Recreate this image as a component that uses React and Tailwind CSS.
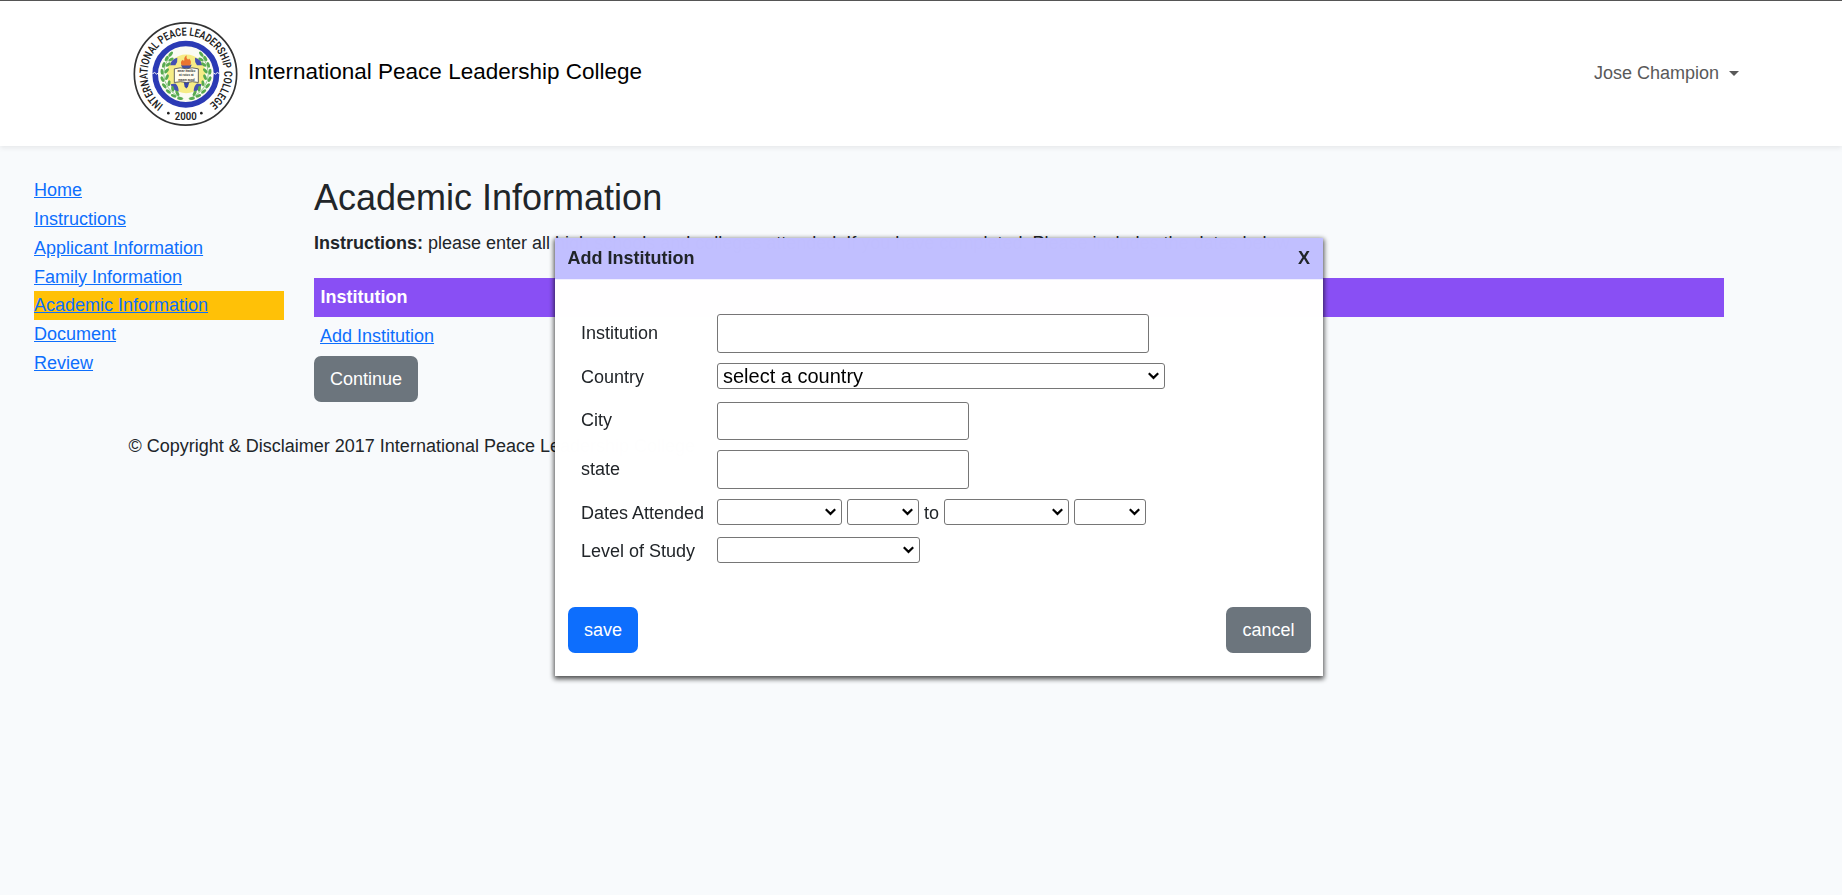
const NAV = [
  'Home',
  'Instructions',
  'Applicant Information',
  'Family Information',
  'Academic Information',
  'Document',
  'Review',
];

const LEAVES = [
  [152, 131, -50], [140, 144, -60], [153, 147, -30], [131, 163, -75], [145, 162, -35],
  [126, 184, -95], [140, 181, -50], [127, 206, -115], [141, 200, -65], [133, 226, -130],
  [147, 218, -80], [145, 243, -145], [158, 235, -100], [161, 256, -160], [172, 248, -120],
  [180, 264, -172],
];

function Seal() {
  return (
    <svg width="106" height="106" viewBox="36 31.5 318 318" className="block shrink-0">
      <defs>
        <path id="ring-top" d="M131 284 A115 115 0 1 1 268 281" />
        <g id="branch">
          <path d="M148 138 Q115 190 145 232 Q164 256 190 264" fill="none" stroke="#5cab52" strokeWidth="2" />
          {LEAVES.map(([x, y, r]) => (
            <ellipse key={`${x}-${y}`} cx={x} cy={y} rx="9" ry="4.500" fill="#58ab50" transform={`rotate(${r} ${x} ${y})`} />
          ))}
        </g>
      </defs>
      <circle cx="196.500" cy="190.500" r="153.500" fill="#fff" stroke="#333" strokeWidth="5" />
      <circle cx="197.500" cy="191" r="92" fill="#fbfbf2" stroke="#2b3ab5" strokeWidth="17" />
      <path d="M97 190l7-4 6 5 6-4M299 190l-7-4-6 5-6-4" fill="none" stroke="#fff" strokeWidth="3" />
      <circle cx="198.500" cy="190" r="58" fill="#f6ec86" />
      <path d="M150 164q4-18 22-22q2 12-6 22zM247 164q-4-18-22-22q-2 12 6 22zM152 221q6 20 24 22q0-16-10-24zM245 221q-6 20-24 22q0-16 10-24z" fill="#4451b2" />
      <use href="#branch" />
      <use href="#branch" transform="translate(396 0) scale(-1 1)" />
      <path d="M191 214h17l-4 15-5 5-5-5z" fill="#3443a8" />
      <path d="M183 163h32l-5 12h-22z" fill="#4450a0" />
      <path d="M185 165q-6-12 4-17q2 5 4 1q-2-9 7-15q-2 8 3 12q3 3 4-2q10 9 3 21z" fill="#ea7430" />
      <path d="M163 175q18-6 36 0q17-6 36 0v41q-18-5-36 0q-17-5-36 0z" fill="#fffdf0" stroke="#4b4b4b" strokeWidth="2.500" />
      <g fontFamily="Liberation Sans, sans-serif" fontWeight="bold" fill="#333" textAnchor="middle">
        <text x="199" y="185" fontSize="9">amar matibo</text>
        <text x="199" y="197.500" fontSize="9">at rotos at</text>
        <text x="199" y="210" fontSize="9">maam acad</text>
      </g>
      <g fontFamily="Roboto, sans-serif" fontWeight="600" fill="#222">
        <text fontSize="34">
          <textPath href="#ring-top" startOffset="1" textLength="574" lengthAdjust="spacingAndGlyphs">
            INTERNATIONAL PEACE LEADERSHIP COLLEGE
          </textPath>
        </text>
        <text fontSize="32" x="164" y="329" textLength="66" lengthAdjust="spacingAndGlyphs">2000</text>
      </g>
      <circle cx="145" cy="308" r="4" fill="#222" />
      <circle cx="244" cy="308" r="4" fill="#222" />
    </svg>
  );
}

function Select({ className, children }) {
  return (
    <div className={`flex h-[26px] items-center justify-between rounded-[3px] border border-[#767676] bg-white pl-[5px] pr-[5px] text-[20px] leading-none text-black ${className}`}>
      <span>{children}</span>
      <svg width="11" height="8" viewBox="0 0 11 8" fill="none" stroke="#000" strokeWidth="2.200" className="shrink-0">
        <path d="M.8 1.300 5.500 5.900 10.200 1.300" />
      </svg>
    </div>
  );
}

function TextField({ className }) {
  return <div className={`rounded-[3px] border border-[#767676] bg-white ${className}`} />;
}

function Field({ label, className, labelClass = '', children }) {
  return (
    <div className={`flex items-center ${className}`}>
      <span className={`w-[136px] shrink-0 ${labelClass}`}>{label}</span>
      {children}
    </div>
  );
}

function Dialog() {
  return (
    <div className="absolute left-[555px] top-[238px] h-[438px] w-[768px] bg-white opacity-[0.999] shadow-[0_2px_5px_1px_rgba(0,0,0,0.7)]">
      <div className="flex h-[41px] items-center justify-between bg-[#c1bfff] pl-[12.500px] pr-[13px] font-bold">
        <span>Add Institution</span>
        <span>X</span>
      </div>
      <div className="h-px bg-[#f0f0ff]" />
      <div className="flex flex-col pl-[26px] pt-[34px]">
        <Field label="Institution" className="h-[39px]">
          <TextField className="h-[39px] w-[432px]" />
        </Field>
        <Field label="Country" className="mt-[10px] h-[26px]" labelClass="pt-[2px]">
          <Select className="w-[448px]">select a country</Select>
        </Field>
        <Field label="City" className="mt-[13px] h-[38px]" labelClass="pb-[2px]">
          <TextField className="h-[38px] w-[252px]" />
        </Field>
        <Field label="state" className="mt-[10px] h-[39px]">
          <TextField className="h-[39px] w-[252px]" />
        </Field>
        <Field label="Dates Attended" className="mt-[10px] h-[26px]" labelClass="pt-[2px]">
          <Select className="w-[125px]" />
          <Select className="ml-[5px] w-[72px]" />
          <span className="w-[25px] pt-[2px] text-center">to</span>
          <Select className="w-[125px]" />
          <Select className="ml-[5px] w-[72px]" />
        </Field>
        <Field label="Level of Study" className="mt-[12px] h-[26px]" labelClass="pt-[2px]">
          <Select className="w-[203px]" />
        </Field>
      </div>
      <div className="mt-[44px] flex justify-between pl-[13px] pr-[12px] text-white">
        <button className="h-[46px] w-[70px] rounded-[7px] bg-[#0d6efd]">save</button>
        <button className="h-[46px] w-[85px] rounded-[7px] bg-[#6c757d]">cancel</button>
      </div>
    </div>
  );
}

export default function App() {
  return (
    <div className="relative h-[895px] w-[1842px] overflow-hidden bg-[#f8fafc] font-['Liberation_Sans',Arial,sans-serif] text-[18px] leading-[28.8px] text-[#212529]">
      <header className="relative flex h-[146px] items-center border-t border-[#555] bg-white pl-[132px] pr-[103px] shadow-[0_2px_5px_rgba(0,0,0,0.075)]">
        <Seal />
        <span className="ml-[10px] pb-[3px] text-[22.5px] text-black">International Peace Leadership College</span>
        <span className="ml-auto text-[#595959]">Jose Champion</span>
        <span className="ml-[10px] h-0 w-0 border-x-[5px] border-t-[5px] border-x-transparent border-t-[#595959]" />
      </header>
      <div className="flex">
        <nav className="ml-[34px] mt-[30px] w-[250px] pt-[0.300px]">
          {NAV.map((item) => (
            <a
              key={item}
              className={
                item === 'Academic Information'
                  ? 'block bg-[#ffc107] text-[#0d6efd] underline'
                  : 'block text-[#0d6efd] underline'
              }
            >
              {item}
            </a>
          ))}
        </nav>
        <main className="ml-[30px] mt-[30px] w-[1410px]">
          <h2 className="h-[43px] text-[36px] leading-[43px]">Academic Information</h2>
          <p className="mt-[10px] whitespace-nowrap">
            <b>Instructions:</b> please enter all high schools and colleges attended. If you have completed. Please includes the dates below
          </p>
          <div className="mt-[20.200px] flex h-[39px] items-center bg-[#894ff4] pl-[6.500px] font-bold text-white">Institution</div>
          <div className="flex h-[39px] items-center pl-[6px]">
            <a className="text-[#0d6efd] underline">Add Institution</a>
          </div>
          <button className="block h-[46px] w-[104px] rounded-[7px] bg-[#6c757d] text-white">Continue</button>
        </main>
      </div>
      <footer className="ml-[128.500px] mt-[30px]">© Copyright &amp; Disclaimer 2017 International Peace Leadership College</footer>
      <Dialog />
    </div>
  );
}
